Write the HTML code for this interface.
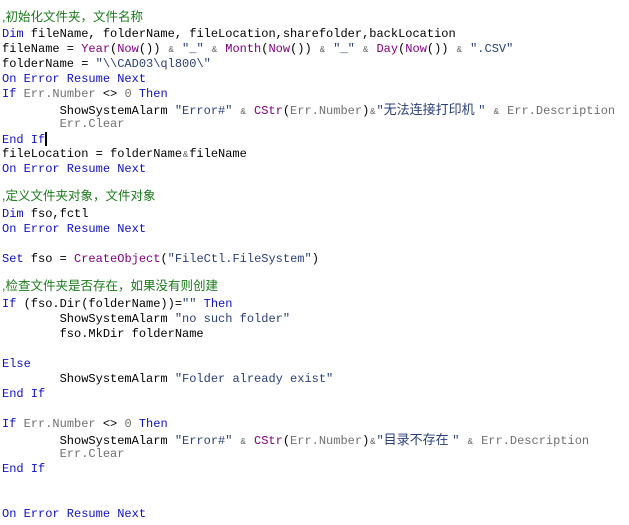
<!DOCTYPE html>
<html><head><meta charset="utf-8"><style>
body{margin:0;background:#fff;width:629px;height:525px;overflow:hidden;position:relative}
.l{position:absolute;left:2px;font-family:"Liberation Mono",monospace;font-size:12px;line-height:15px;white-space:pre;color:#000}
.k{color:#1010c8}.s{color:#2a3f7a}.f{color:#800080}.g{color:#707070}
.a{color:#666;font-size:9px;display:inline-block;width:7.2px;text-align:center}
.c{color:#1a7a1a;font-family:"Liberation Sans","Noto Sans CJK SC",sans-serif;font-size:12.5px}
.z{font-family:"Liberation Sans","Noto Sans CJK SC",sans-serif;font-size:13px}
.cur{display:inline-block;width:2px;height:14px;background:#000;vertical-align:-3px}
</style></head><body>
<div class="l c" style="top:10px">,初始化文件夹，文件名称</div>
<div class="l" style="top:27px"><span class="k">Dim</span> fileName, folderName, fileLocation,sharefolder,backLocation</div>
<div class="l" style="top:42px">fileName = <span class="f">Year</span>(<span class="f">Now</span>()) <span class="a">&amp;</span> <span class="s">"_"</span> <span class="a">&amp;</span> <span class="f">Month</span>(<span class="f">Now</span>()) <span class="a">&amp;</span> <span class="s">"_"</span> <span class="a">&amp;</span> <span class="f">Day</span>(<span class="f">Now</span>()) <span class="a">&amp;</span> <span class="s">".CSV"</span></div>
<div class="l" style="top:57px">folderName = <span class="s">"\\CAD03\ql800\"</span></div>
<div class="l k" style="top:72px">On Error Resume Next</div>
<div class="l" style="top:87px"><span class="k">If</span> <span class="g">Err.Number</span> &lt;&gt; <span class="g">0</span> <span class="k">Then</span></div>
<div class="l" style="top:102px">        ShowSystemAlarm <span class="s">"Error#"</span> <span class="a">&amp;</span> <span class="f">CStr</span>(<span class="g">Err.Number</span>)<span class="a">&amp;</span><span class="s">"<span class="z">无法连接打印机 </span>"</span> <span class="a">&amp;</span> <span class="g">Err.Description</span></div>
<div class="l g" style="top:117px">        Err.Clear</div>
<div class="l" style="top:132px"><span class="k">End If</span><span class="cur"></span></div>
<div class="l" style="top:147px">fileLocation = folderName<span class="a">&amp;</span>fileName</div>
<div class="l k" style="top:162px">On Error Resume Next</div>
<div class="l c" style="top:189px">,定义文件夹对象，文件对象</div>
<div class="l" style="top:207px"><span class="k">Dim</span> fso,fctl</div>
<div class="l k" style="top:222px">On Error Resume Next</div>
<div class="l" style="top:252px"><span class="k">Set</span> fso = <span class="f">CreateObject</span>(<span class="s">"FileCtl.FileSystem"</span>)</div>
<div class="l c" style="top:279px">,检查文件夹是否存在，如果没有则创建</div>
<div class="l" style="top:297px"><span class="k">If</span> (fso.Dir(folderName))=<span class="s">""</span> <span class="k">Then</span></div>
<div class="l" style="top:312px">        ShowSystemAlarm <span class="s">"no such folder"</span></div>
<div class="l" style="top:327px">        fso.MkDir folderName</div>
<div class="l k" style="top:357px">Else</div>
<div class="l" style="top:372px">        ShowSystemAlarm <span class="s">"Folder already exist"</span></div>
<div class="l k" style="top:387px">End If</div>
<div class="l" style="top:417px"><span class="k">If</span> <span class="g">Err.Number</span> &lt;&gt; <span class="g">0</span> <span class="k">Then</span></div>
<div class="l" style="top:432px">        ShowSystemAlarm <span class="s">"Error#"</span> <span class="a">&amp;</span> <span class="f">CStr</span>(<span class="g">Err.Number</span>)<span class="a">&amp;</span><span class="s">"<span class="z">目录不存在 </span>"</span> <span class="a">&amp;</span> <span class="g">Err.Description</span></div>
<div class="l g" style="top:447px">        Err.Clear</div>
<div class="l k" style="top:462px">End If</div>
<div class="l k" style="top:507px">On Error Resume Next</div>
</body></html>
